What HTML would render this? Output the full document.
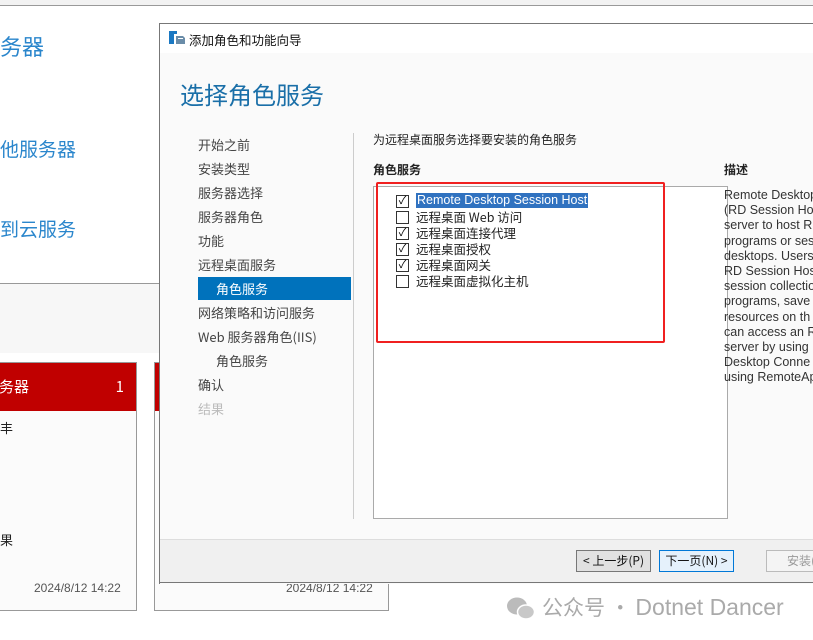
<!DOCTYPE html>
<html style="overflow:hidden"><head><meta charset="utf-8"><style>
*{margin:0;padding:0;box-sizing:border-box}
body{width:813px;height:640px;overflow:hidden;background:#fff;position:relative;font-family:"Liberation Sans","Noto Sans CJK SC",sans-serif}
#w{position:absolute;left:0;top:0;width:813px;height:640px;overflow:hidden}
.a{position:absolute}
.cn{font-family:"Noto Sans CJK SC","Liberation Sans",sans-serif}
.nav{position:absolute;left:198px;font-size:13px;color:#444;line-height:16px}
.cb{position:absolute;left:396px;width:13px;height:13px;border:1px solid #333;background:#fff;font-size:11px;line-height:11px;text-align:center;color:#000}
.it{position:absolute;left:416px;font-size:12.5px;color:#222;line-height:15px}
.d{position:absolute;left:724px;font-size:12.5px;color:#333;line-height:15.2px;white-space:nowrap}
</style></head><body><div id="w">
<div class="a" style="left:0;top:0;width:813px;height:6px;background:#f2f2f2;border-bottom:1px solid #999"></div>
<div class="a cn" style="left:0;top:30px;font-size:22px;color:#2a86cc">务器</div>
<div class="a cn" style="left:0;top:135px;font-size:19px;color:#2a86cc">他服务器</div>
<div class="a cn" style="left:0;top:215px;font-size:19px;color:#2a86cc">到云服务</div>
<div class="a" style="left:0;top:283px;width:160px;height:70px;background:#f7f7f7;border-top:1px solid #999"></div>
<div class="a" style="left:-2px;top:362px;width:139px;height:249px;border:1px solid #999;background:#fbfbfb"></div>
<div class="a cn" style="left:-1px;top:363px;width:137px;height:48px;background:#c00000;color:#fff;font-size:15px;line-height:48px">务器<span style="position:absolute;right:12px">1</span></div>
<div class="a cn" style="left:0;top:418px;font-size:13px;color:#222">丰</div>
<div class="a cn" style="left:0;top:530px;font-size:13px;color:#222">果</div>
<div class="a" style="left:34px;top:581px;font-size:12px;color:#555">2024/8/12 14:22</div>
<div class="a" style="left:154px;top:362px;width:235px;height:249px;border:1px solid #999;background:#fbfbfb"></div>
<div class="a" style="left:155px;top:363px;width:5px;height:48px;background:#c00000"></div>
<div class="a" style="left:286px;top:581px;font-size:12px;color:#555">2024/8/12 14:22</div>

<div class="a" style="left:159px;top:23px;width:654px;height:561px;border-left:1px solid #777;border-top:1px solid #777;background:#fafafa"></div>
<div class="a" style="left:160px;top:24px;width:653px;height:29px;background:#fff"></div>
<svg class="a" style="left:169px;top:31px" width="16" height="14"><rect x="0" y="0" width="5" height="13" fill="#1a78c2"/><rect x="5" y="0" width="3" height="3" fill="#1a78c2"/><path d="M7 5h7l2 2v6H7z" fill="#6a8ca8"/><rect x="9" y="7" width="5" height="1" fill="#fff"/></svg>
<div class="a cn" style="left:189px;top:30px;font-size:12.5px;color:#111">添加角色和功能向导</div>
<div class="a cn" style="left:180px;top:76px;font-size:24px;color:#1a6fa8">选择角色服务</div>
<div class="a" style="left:353px;top:133px;width:1px;height:386px;background:#ccc"></div>
<div class="nav cn" style="top:137px">开始之前</div>
<div class="nav cn" style="top:161px">安装类型</div>
<div class="nav cn" style="top:185px">服务器选择</div>
<div class="nav cn" style="top:209px">服务器角色</div>
<div class="nav cn" style="top:233px">功能</div>
<div class="nav cn" style="top:257px">远程桌面服务</div>
<div class="a" style="left:198px;top:277px;width:153px;height:23px;background:#0072bc"></div>
<div class="nav cn" style="top:281px;left:216px;color:#fff">角色服务</div>
<div class="nav cn" style="top:305px">网络策略和访问服务</div>
<div class="nav cn" style="top:329px">Web 服务器角色(IIS)</div>
<div class="nav cn" style="top:353px;left:216px">角色服务</div>
<div class="nav cn" style="top:377px">确认</div>
<div class="nav cn" style="top:401px;color:#bbb">结果</div>

<div class="a cn" style="left:373px;top:131px;font-size:12px;color:#222">为远程桌面服务选择要安装的角色服务</div>
<div class="a cn" style="left:373px;top:161px;font-size:12px;font-weight:bold;color:#222">角色服务</div>
<div class="a cn" style="left:724px;top:161px;font-size:12px;font-weight:bold;color:#222">描述</div>
<div class="a" style="left:373px;top:186px;width:355px;height:333px;border:1px solid #aaa;background:#fff"></div>
<div class="a" style="left:376px;top:182px;width:289px;height:161px;border:2px solid #f02020;border-radius:2px"></div>
<div class="cb" style="top:195px">✓</div><div class="it" style="top:193px;background:#3072c0;color:#fff;padding:0 1px">Remote Desktop Session Host</div>
<div class="cb" style="top:211px"></div><div class="it cn" style="top:209px">远程桌面 Web 访问</div>
<div class="cb" style="top:227px">✓</div><div class="it cn" style="top:225px">远程桌面连接代理</div>
<div class="cb" style="top:243px">✓</div><div class="it cn" style="top:241px">远程桌面授权</div>
<div class="cb" style="top:259px">✓</div><div class="it cn" style="top:257px">远程桌面网关</div>
<div class="cb" style="top:275px"></div><div class="it cn" style="top:273px">远程桌面虚拟化主机</div>

<div class="d" style="top:188px">Remote Desktop<br>(RD Session Host<br>server to host R<br>programs or ses<br>desktops. Users<br>RD Session Host<br>session collectio<br>programs, save<br>resources on th<br>can access an R<br>server by using<br>Desktop Conne<br>using RemoteAp</div>

<div class="a" style="left:160px;top:539px;width:653px;height:44px;background:#f0f0f0;border-top:1px solid #ddd;border-bottom:1px solid #777"></div>
<div class="a cn" style="left:576px;top:550px;width:75px;height:22px;border:1px solid #777;background:#e1e1e1;font-size:12px;line-height:20px;text-align:center;color:#111">&lt; 上一步(P)</div>
<div class="a cn" style="left:659px;top:550px;width:75px;height:22px;border:1px solid #0078d7;background:#e5f1fb;font-size:12px;line-height:20px;text-align:center;color:#111">下一页(N) &gt;</div>
<div class="a cn" style="left:766px;top:550px;width:60px;height:22px;border:1px solid #bbb;background:#f4f4f4;font-size:12px;line-height:20px;padding-left:20px;color:#999">安装(</div>

<svg class="a" style="left:506px;top:595px" width="30" height="26"><ellipse cx="11" cy="11" rx="10" ry="8.5" fill="#bbb"/><ellipse cx="20" cy="17" rx="8.5" ry="7" fill="#c8c8c8" stroke="#fff" stroke-width="1.5"/></svg>
<div class="a cn" style="left:542px;top:592px;font-size:21px;color:#aaa;white-space:nowrap">公众号 · <span style="font-family:'Liberation Sans',sans-serif;font-size:23px">Dotnet Dancer</span></div>
</div></body></html>
